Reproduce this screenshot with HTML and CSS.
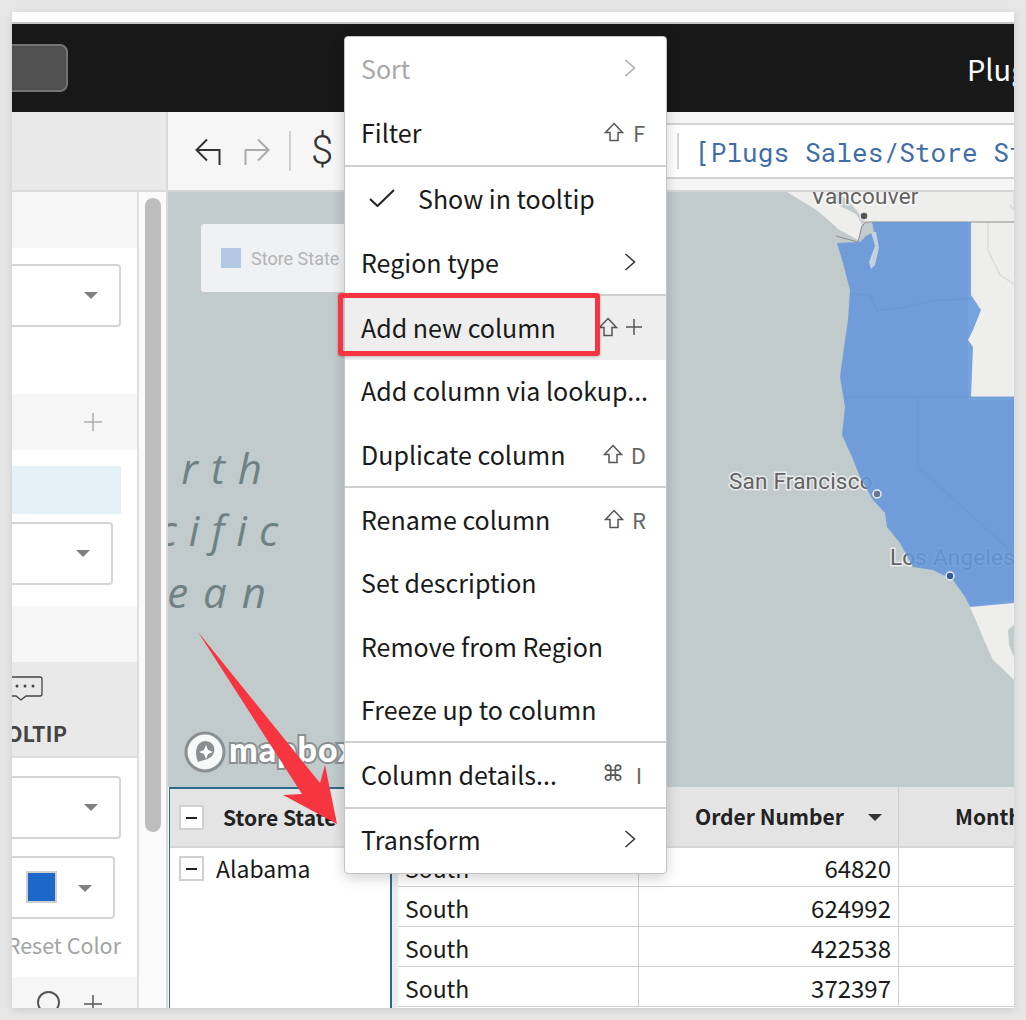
FILE: index.html
```html
<!DOCTYPE html>
<html lang="en">
<head>
<meta charset="utf-8">
<title>Plugs Sales</title>
<link rel="stylesheet" href="styles.css">
</head>
<body>
<div class="app">
  <div class="top-strip"></div>
  <header class="header">
    <div class="header-btn"></div>
    <div class="header-title">Plugs Sales</div>
  </header>
  <div class="main">
    <aside class="side">
      <div class="side-top"></div>
      <div class="side-body">
        <div class="panel">
          <div class="sec grey h56"></div>
          <div class="sec white h146">
            <div class="select sel-a"><i class="caret"></i></div>
          </div>
          <div class="sec grey h56 plus-row"><svg class="plus" viewBox="0 0 18 18"><path d="M9 0V18M0 9H18"/></svg></div>
          <div class="sec white h156">
            <div class="hilite"></div>
            <div class="select sel-b"><i class="caret"></i></div>
          </div>
          <div class="sec grey h56"></div>
          <div class="sec tip">
            <svg class="tip-icon" viewBox="0 0 32 28"><path d="M-6 1H28a2 2 0 0 1 2 2V18a2 2 0 0 1-2 2H14l-5 4-5-4H-6"/><circle cx="5" cy="10" r="1.5"/><circle cx="13" cy="10" r="1.5"/><circle cx="21" cy="10" r="1.5"/></svg>
            <div class="tip-label">TOOLTIP</div>
          </div>
          <div class="sec white h219">
            <div class="select sel-c"><i class="caret"></i></div>
            <div class="select sel-d"><span class="swatch"></span><i class="caret"></i></div>
            <div class="reset">Reset Color</div>
          </div>
          <div class="sec grey last">
            <span class="circle"></span>
            <svg class="plus dark" viewBox="0 0 18 18"><path d="M9 0V18M0 9H18"/></svg>
          </div>
        </div>
        <div class="gutter"><div class="thumb"></div></div>
      </div>
    </aside>
    <section class="content">
      <div class="toolbar">
        <svg class="tool-icon" viewBox="0 0 26 28"><path d="M12 1.5L1.5 12L12 22.5M1.5 12H24.5V27" /></svg>
        <svg class="tool-icon off" viewBox="0 0 26 28"><path d="M14 1.5L24.5 12L14 22.5M24.5 12H1.5V27" /></svg>
        <span class="tool-sep"></span>
        <span class="dollar">$</span>
        <div class="formula"><span class="formula-sep"></span><span class="formula-text">[Plugs Sales/Store State]</span></div>
      </div>
      <div class="map">
        <svg class="map-svg" viewBox="168 192 846 595" xmlns="http://www.w3.org/2000/svg">
          <rect x="168" y="192" width="846" height="595" fill="#c2cbcc"/>
          <path class="land" d="M787 192L800 200L815 209L826 218L838 229L858 240L862 224L856 214L842 207L830 198L838 192Z"/>
          <path class="land" d="M838 192L852 205L866 222H1014V192Z"/>
          <path class="land" d="M968 222H1014V400H968Z"/>
          <path class="land" d="M965 596L972 606L1014 600V680L1006 672L993 660L984 640L977 623Z"/>
          <path class="gulf" d="M1014 625L1008 630L1009 645L1014 657Z"/>
          <path class="road" d="M988 222V250L1000 275L1014 284M1014 192V210L1010 205"/>
          <path class="border" d="M836 236L858 242L862 226L866 222H1014"/>
          <text class="ocean north" x="275" y="484" text-anchor="end">North</text>
          <text class="ocean pacific" x="290" y="546" text-anchor="end">Pacific</text>
          <text class="ocean" x="281" y="608" text-anchor="end">Ocean</text>
          <text class="city" x="811" y="204">Vancouver</text>
          <text class="city" x="729" y="489">San Francisco</text>
          <text class="city" x="890" y="565">Los Angeles</text>
          <path class="blue" d="M872 222H971V295L981 310L973 330L968 340L973 347L971 397H1014V603L970 607L965 597L953 580L933 570L913 567L900 543L887 527L885 513L873 500L860 477L852 457L842 435L845 407L840 377L845 340L848 320L850 290L843 263L837 243L860 242L866 236L874 232Z"/>
          <path class="puget" d="M871 232L875 246L869 262L871 269L875 265L879 248L876 232Z"/>
          <path class="state" d="M850 294L870 295L877 310L900 308L935 300L971 299M845 397H1014M918 398V467L1012 552"/>
          <circle class="dot" cx="864" cy="216" r="4"/>
          <circle class="dot sf" cx="877" cy="494" r="4"/>
          <circle class="dot la" cx="950" cy="576" r="4"/>
          <circle class="mb-ring" cx="205" cy="752" r="19"/>
          <path class="mb-drop" d="M198 762C194 752 196 742 205 741C214 741 217 750 212 756C208 760 203 760 198 762Z"/>
          <path class="mb-star" d="M206 745L208 750L213 752L208 754L206 759L204 754L199 752L204 750Z"/>
          <text class="mapbox" x="229" y="762">mapbox</text>
        </svg>
        <div class="legend"><span class="legend-swatch"></span><span class="legend-text">Store State</span></div>
      </div>
      <div class="table">
        <div class="pivot">
          <div class="pivot-head"><span class="minus"></span><span class="pivot-title">Store State</span></div>
          <div class="pivot-row"><span class="minus"></span><span class="pivot-value">Alabama</span></div>
        </div>
        <div class="gap"></div>
        <div class="grid">
          <div class="head cell"></div>
          <div class="head cell order"><span>Order Number</span><i class="caret dark"></i></div>
          <div class="head cell month">Month</div>
          <div class="cell first">South</div><div class="cell first num">64820</div><div class="cell first"></div>
          <div class="cell">South</div><div class="cell num">624992</div><div class="cell"></div>
          <div class="cell">South</div><div class="cell num">422538</div><div class="cell"></div>
          <div class="cell">South</div><div class="cell num">372397</div><div class="cell"></div>
        </div>
      </div>
    </section>
  </div>

  <div class="menu">
    <div class="group">
      <div class="item disabled"><span>Sort</span><svg class="chev" viewBox="0 0 12 18"><path d="M1.5 1L10.5 9L1.5 17"/></svg></div>
      <div class="item"><span>Filter</span><span class="keys"><svg class="shift" viewBox="0 0 20 20"><path d="M10 1.5L18.5 10.5H14V18.5H6V10.5H1.5Z"/></svg><b class="key">F</b></span></div>
    </div>
    <div class="group">
      <div class="item"><svg class="check" viewBox="0 0 26 18"><path d="M1 10L8.5 17L25 1"/></svg><span class="check-label">Show in tooltip</span></div>
      <div class="item"><span>Region type</span><svg class="chev dark" viewBox="0 0 12 18"><path d="M1.5 1L10.5 9L1.5 17"/></svg></div>
    </div>
    <div class="group">
      <div class="item active"><span>Add new column</span><span class="keys"><svg class="shift" viewBox="0 0 20 20"><path d="M10 1.5L18.5 10.5H14V18.5H6V10.5H1.5Z"/></svg><svg class="keyplus" viewBox="0 0 16 16"><path d="M8 0V16M0 8H16"/></svg></span></div>
      <div class="item"><span>Add column via lookup...</span></div>
      <div class="item"><span>Duplicate column</span><span class="keys"><svg class="shift" viewBox="0 0 20 20"><path d="M10 1.5L18.5 10.5H14V18.5H6V10.5H1.5Z"/></svg><b class="key">D</b></span></div>
    </div>
    <div class="group">
      <div class="item"><span>Rename column</span><span class="keys"><svg class="shift" viewBox="0 0 20 20"><path d="M10 1.5L18.5 10.5H14V18.5H6V10.5H1.5Z"/></svg><b class="key">R</b></span></div>
      <div class="item"><span>Set description</span></div>
      <div class="item"><span>Remove from Region</span></div>
      <div class="item"><span>Freeze up to column</span></div>
    </div>
    <div class="group">
      <div class="item"><span>Column details...</span><span class="keys"><b class="cmd">⌘</b><b class="key i">I</b></span></div>
    </div>
    <div class="group">
      <div class="item"><span>Transform</span><svg class="chev dark" viewBox="0 0 12 18"><path d="M1.5 1L10.5 9L1.5 17"/></svg></div>
    </div>
  </div>

  <div class="callout"></div>
  <svg class="arrow" viewBox="0 0 150 200"><path d="M2 2L124 153L129 135L141 194L87 165L106 164Z"/></svg>
</div>
</body>
</html>
```
FILE: styles.css
```css
* { box-sizing: border-box; }
html, body { margin: 0; height: 100%; }
body {
  background: #e6e6e6;
  overflow: hidden;
  font-family: "Noto Sans CJK JP", "Source Sans Pro", "Noto Sans", sans-serif;
  color: #1a1a1a;
}
.app {
  position: relative;
  width: 1002px;
  height: 996px;
  margin: 12px;
  background: #fff;
  overflow: hidden;
  display: flex;
  flex-direction: column;
  box-shadow: 0 2px 8px rgba(0,0,0,.12);
}
.top-strip { height: 12px; flex: none; background: #fff; border-bottom: 2px solid #c6c6c6; }
.header { height: 88px; flex: none; background: #181818; display: flex; align-items: flex-start; overflow: hidden; }
.header-btn { width: 66px; height: 48px; margin: 20px 0 0 -10px; flex: none; background: #505050; border: 2px solid #747474; border-radius: 8px; }
.header-title { margin: 22px 0 0 899px; color: #fff; font-size: 29px; line-height: 44px; white-space: nowrap; flex: none; }
.main { flex: 1; display: flex; min-height: 0; }

/* left */
.side { width: 156px; flex: none; display: flex; flex-direction: column; }
.side-top { height: 80px; flex: none; background: #e9e9e9; border-right: 2px solid #dadada; border-bottom: 2px solid #dadada; }
.side-body { flex: 1; display: flex; min-height: 0; }
.panel { width: 127px; flex: none; border-right: 2px solid #dedede; overflow: hidden; }
.gutter { flex: 1; background: #fafafa; border-right: 2px solid #dadada; padding: 6px 5px 0 6px; }
.thumb { width: 16px; height: 634px; background: #bdbdbd; border-radius: 8px; }
.sec { position: relative; }
.grey { background: #f6f6f6; }
.white { background: #fff; }
.h56 { height: 56px; }
.h146 { height: 146px; padding-top: 16px; }
.h156 { height: 156px; padding-top: 16px; }
.h219 { height: 219px; padding-top: 18px; }
.select { height: 63px; margin-left: -10px; background: #fff; border: 2px solid #d4d4d4; border-radius: 4px; position: relative; }
.sel-a, .sel-c { width: 119px; }
.sel-b { width: 111px; margin-top: 8px; }
.sel-c { height: 63px; }
.sel-d { width: 113px; margin-top: 17px; }
.caret { position: absolute; width: 0; height: 0; border-left: 7px solid transparent; border-right: 7px solid transparent; border-top: 7px solid #808080; top: 26px; right: 21px; }
.sel-d .caret { right: 21px; top: 27px; }
.swatch { position: absolute; left: 22px; top: 13px; width: 31px; height: 32px; background: #1b68c8; border: 2px solid #cfcfcf; }
.plus-row { display: flex; align-items: center; justify-content: flex-end; padding-right: 35px; }
.plus { width: 18px; height: 18px; fill: none; stroke: #aaa; stroke-width: 1.5; flex: none; }
.plus.dark { stroke: #555; position: absolute; left: 72px; top: 18px; }
.hilite { height: 48px; width: 109px; background: #e4f1f7; }
.tip { height: 96px; background: #e9e9e9; border-bottom: 2px solid #dedede; overflow: hidden; }
.tip-icon { position: absolute; left: 0; top: 14px; width: 32px; height: 28px; fill: none; stroke: #444; stroke-width: 1.3; overflow: hidden; }
.tip-icon circle { fill: #444; stroke: none; }
.tip-label { position: absolute; right: 70px; top: 57px; font-size: 21.5px; line-height: 28px; font-weight: 700; color: #444; white-space: nowrap; }
.reset { margin-top: 11px; display: flex; justify-content: flex-end; font-size: 21.5px; line-height: 30px; color: #a3a3a3; white-space: nowrap; padding-right: 16px; }
.last { height: 40px; position: relative; }
.circle { position: absolute; left: 25px; top: 14px; width: 23px; height: 23px; border: 2px solid #555; border-radius: 50%; }

/* right */
.content { flex: 1; display: flex; flex-direction: column; min-width: 0; }
.toolbar { height: 80px; flex: none; background: #f6f6f6; border-bottom: 2px solid #d6d6d6; display: flex; align-items: flex-start; padding-left: 27px; position: relative; }
.tool-icon { width: 26px; height: 28px; margin-top: 26px; margin-right: 23px; flex: none; fill: none; stroke: #333; stroke-width: 2; }
.tool-icon.off { stroke: #aaa; margin-right: 19px; }
.tool-sep { width: 2px; height: 40px; margin-top: 19px; background: #cfcfcf; flex: none; }
.dollar { margin: 14px 0 0 20px; font-family: "Roboto", sans-serif; font-weight: 300; font-size: 40px; line-height: 50px; color: #333; flex: none; }
.formula { position: absolute; left: 400px; right: 0; top: 11px; height: 56px; background: #fff; border-top: 2px solid #d2d2d2; border-bottom: 2px solid #d2d2d2; display: flex; align-items: center; overflow: hidden; }
.formula-sep { width: 2px; height: 36px; background: #d6d6d6; margin-left: 109px; flex: none; }
.formula-text { margin: 2px 0 0 16px; font-family: "Roboto Mono", "Liberation Mono", monospace; font-size: 26px; letter-spacing: .1px; line-height: 40px; color: #3f6ea6; white-space: nowrap; flex: none; }

.map { height: 595px; flex: none; position: relative; overflow: hidden; border-left: 0; }
.map-svg { display: block; width: 846px; height: 595px; }
.land { fill: #eeeeec; }
.gulf { fill: #c2cbcc; }
.road { fill: none; stroke: #dcdcda; stroke-width: 1.5; }
.border { fill: none; stroke: #8d8d8d; stroke-width: 1; }
.ocean { font-family: "Open Sans", sans-serif; font-style: italic; font-size: 42px; letter-spacing: 15px; fill: #6e8283; }
.ocean.north { letter-spacing: 13px; }
.ocean.pacific { letter-spacing: 12px; }
.city { font-family: "Roboto", sans-serif; font-size: 22.5px; letter-spacing: .2px; fill: #626262; stroke: rgba(255,255,255,.65); stroke-width: 3px; paint-order: stroke; }
.blue { fill: #6497da; fill-opacity: .87; }
.puget { fill: #c4d2de; }
.state { fill: none; stroke: #6c96c9; stroke-width: 1.2; stroke-opacity: .8; }
.dot { fill: #555; stroke: #eee; stroke-width: 1.5; }
.dot.sf { fill: #66788c; }
.dot.la { fill: #2f5f9f; }
.mb-ring { fill: #f7f8f8; stroke: #8a9091; stroke-width: 3; }
.mb-drop { fill: #8a9091; }
.mb-star { fill: #fff; }
.mapbox { font-family: "Lato", sans-serif; font-weight: 900; font-size: 34px; fill: #fff; stroke: #8a9091; stroke-width: 4px; paint-order: stroke; letter-spacing: 1px; }
.legend { position: absolute; left: 33px; top: 32px; width: 200px; height: 68px; background: #eff1f3; border-radius: 3px; display: flex; align-items: center; padding-left: 20px; overflow: hidden; }
.legend-swatch { width: 20px; height: 20px; background: #b2c8e3; flex: none; }
.legend-text { margin-left: 10px; font-family: "Roboto", sans-serif; font-size: 18px; color: #b4b4b4; white-space: nowrap; }

.table { flex: 1; display: flex; min-height: 0; overflow: hidden; }
.pivot { width: 223px; margin-left: 1px; flex: none; border-left: 1px solid #2a6a8c; border-right: 2px solid #2a6a8c; border-top: 2px solid #2a6a8c; }
.pivot-head { height: 59px; background: #e4e4e4; border-bottom: 2px solid #d6d6d6; display: flex; align-items: center; padding-left: 9px; }
.minus { width: 25px; height: 25px; flex: none; background: #fff; border: 2px solid #d0d0d0; position: relative; }
.minus::after { content: ""; position: absolute; left: 5px; right: 5px; top: 10px; height: 2px; background: #222; }
.pivot-title { margin: 0 0 2px 19px; font-size: 21px; line-height: 30px; font-weight: 700; color: #222; white-space: nowrap; }
.pivot-row { display: flex; align-items: center; padding: 6px 0 0 9px; }
.pivot-value { margin-left: 12px; font-size: 23px; line-height: 28px; }
.gap { width: 6px; flex: none; background: #ececec; }
.grid { flex: 1; display: grid; grid-template-columns: 241px 260px 1fr; grid-template-rows: 61px 39px; grid-auto-rows: 40px; align-content: start; background: #fff; }
.cell { border-right: 1px solid #d0d0d0; border-bottom: 1px solid #d0d0d0; font-size: 23px; line-height: 38px; padding: 2px 7px 0; white-space: nowrap; overflow: hidden; }
.cell:nth-child(3n) { border-right: 0; }
.first { line-height: 36px; }
.num { text-align: right; font-size: 24px; }
.head { background: #e4e4e4; border-bottom: 2px solid #d6d6d6; font-size: 21px; font-weight: 700; color: #222; line-height: 54px; position: relative; }
.order { padding-left: 56px; }
.month { padding-left: 56px; }
.caret.dark { border-top-color: #333; top: 27px; right: 16px; }

/* menu */
.menu { position: absolute; left: 332px; top: 24px; width: 323px; height: 838px; background: #fff; border: 1px solid #c4c4c4; border-radius: 4px; box-shadow: 0 4px 14px rgba(0,0,0,.18); }
.group + .group { border-top: 2px solid #cfcfcf; }
.group:nth-child(2) { padding-top: 1px; }
.item { height: 63.3px; display: flex; align-items: center; justify-content: space-between; padding: 0 20px 2px 16px; font-size: 25px; line-height: 36px; color: #1a1a1a; white-space: nowrap; }
.group:first-child .item:first-child { height: 64.5px; }
.item.active { background: #eee; }
.item.disabled { color: #a8a8a8; }
.chev { width: 12px; height: 18px; margin-right: 10px; fill: none; stroke: #aaa; stroke-width: 1.5; flex: none; }
.chev.dark { stroke: #333; }
.keys { display: flex; align-items: center; gap: 8px; flex: none; }
.shift { width: 20px; height: 20px; fill: none; stroke: #555; stroke-width: 1.5; }
.key { font-weight: 400; font-size: 22px; color: #666; min-width: 14px; text-align: center; }
.key.i { min-width: 14px; }
.cmd { font-family: "DejaVu Sans", sans-serif; font-weight: 400; font-size: 22px; color: #555; }
.keyplus { width: 16px; height: 16px; fill: none; stroke: #555; stroke-width: 1.5; margin-right: 4px; }
.check { width: 26px; height: 18px; margin-left: 8px; fill: none; stroke: #222; stroke-width: 2; flex: none; }
.check-label { margin-left: 23px; margin-right: auto; }

/* annotations */
.callout { position: absolute; left: 326px; top: 281px; width: 262px; height: 63px; border: 5px solid #f63540; border-radius: 3px; box-shadow: 0 1px 3px rgba(0,0,0,.2); }
.arrow { position: absolute; left: 184px; top: 618px; width: 150px; height: 200px; fill: #f63540; }
```
